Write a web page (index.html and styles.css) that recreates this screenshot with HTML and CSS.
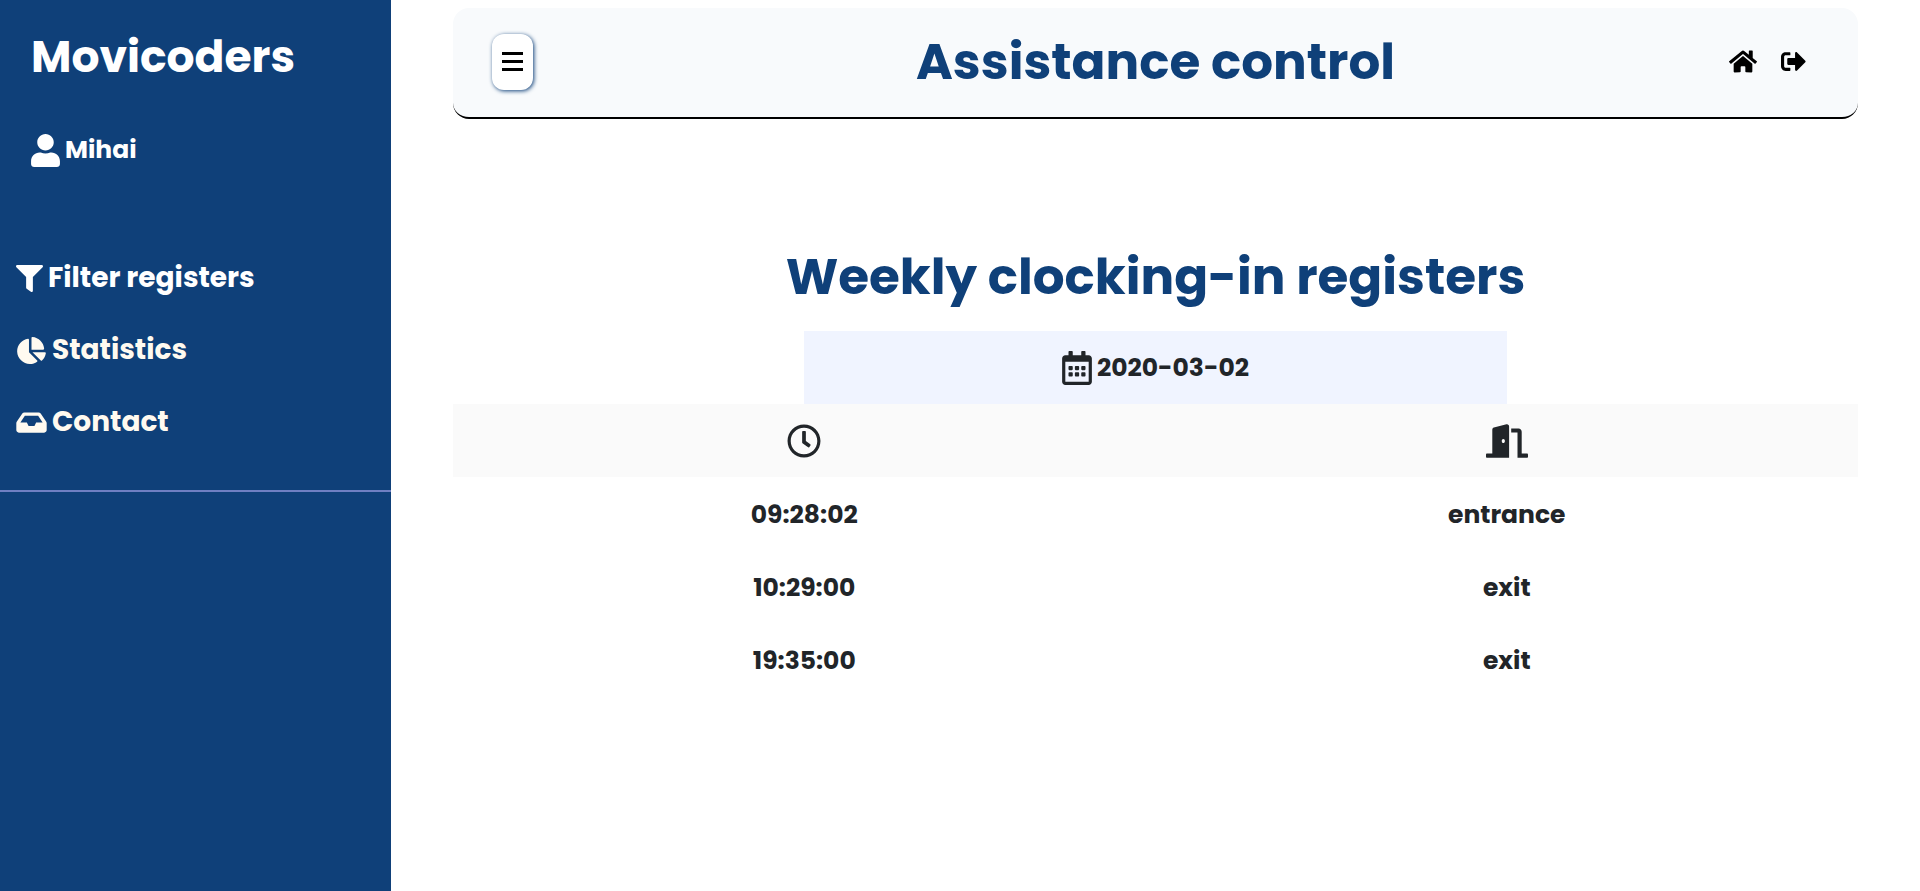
FILE: index.html
```html
<!DOCTYPE html>
<html lang="en">
<head>
<meta charset="utf-8">
<meta name="viewport" content="width=device-width, initial-scale=1">
<title>Assistance control</title>
<link rel="stylesheet" href="styles.css">
</head>
<body>
<div class="layout">
  <aside class="sidebar">
    <div class="brand">Movicoders</div>
    <div class="user">
      <svg class="icon-user" viewBox="0 0 448 512" aria-hidden="true"><path d="M224 256c70.700 0 128-57.300 128-128S294.700 0 224 0 96 57.300 96 128s57.300 128 128 128zm89.600 32h-16.700c-22.200 10.200-46.900 16-72.900 16s-50.600-5.800-72.900-16h-16.700C60.200 288 0 348.200 0 422.400V464c0 26.500 21.500 48 48 48h352c26.500 0 48-21.500 48-48v-41.600c0-74.200-60.200-134.400-134.400-134.400z"/></svg>
      <span>Mihai</span>
    </div>
    <nav class="menu" aria-label="Main">
      <a class="menu-link menu-link-active" href="#filter">
        <svg class="icon-filter" viewBox="0 0 512 512" aria-hidden="true"><path d="M487.976 0H24.028C2.710 0-8.047 25.866 7.058 40.971L192 225.941V432c0 7.831 3.821 15.170 10.237 19.662l80 55.980C298.020 518.690 320 507.493 320 487.980V225.941l184.947-184.970C520.021 25.896 509.338 0 487.976 0z"/></svg>
        <span>Filter registers</span>
      </a>
      <a class="menu-link" href="#statistics">
        <svg class="icon-pie" viewBox="0 0 544 512" aria-hidden="true"><path d="M527.790 288H290.500l158.030 158.030c6.040 6.040 15.980 6.530 22.190.680 38.700-36.460 65.320-85.610 73.130-140.860 1.340-9.460-6.510-17.850-16.060-17.850zm-15.830-64.800C503.720 103.740 408.260 8.280 288.800.040 279.680-.590 272 7.100 272 16.240V240h223.770c9.140 0 16.820-7.680 16.190-16.800zM224 288V50.710c0-9.550-8.390-17.400-17.840-16.060C86.990 51.490-4.100 155.600.140 280.370 4.500 408.510 114.830 513.590 243.030 511.980c50.400-.630 96.970-16.870 135.260-44.030 7.900-5.600 8.420-17.230 1.570-24.080L224 288z"/></svg>
        <span>Statistics</span>
      </a>
      <a class="menu-link" href="#contact">
        <svg class="icon-inbox" viewBox="0 0 576 512" aria-hidden="true"><path d="M567.938 243.908L462.250 85.374A48.003 48.003 0 0 0 422.311 64H153.689a48 48 0 0 0-39.938 21.374L8.062 243.908A47.994 47.994 0 0 0 0 270.533V400c0 26.510 21.490 48 48 48h480c26.510 0 48-21.490 48-48V270.533a47.994 47.994 0 0 0-8.062-26.625zM162.252 128h251.497l85.333 128H376l-32 64H232l-32-64H76.918l85.334-128z"/></svg>
        <span>Contact</span>
      </a>
    </nav>
  </aside>
  <main class="content">
    <header class="topbar">
      <button class="toggle" type="button" aria-label="Toggle menu">
        <svg class="icon-bars" viewBox="0 0 21 19" aria-hidden="true"><path d="M0 0h21v3H0zM0 8h21v3H0zM0 16h21v3H0z"/></svg>
      </button>
      <h1 class="title">Assistance control</h1>
      <div class="actions">
        <a class="action" href="#home" aria-label="Home"><svg class="icon-home" viewBox="0 0 576 512" aria-hidden="true"><path d="M280.370 148.260L96 300.110V464a16 16 0 0 0 16 16l112.060-.290a16 16 0 0 0 15.920-16V368a16 16 0 0 1 16-16h64a16 16 0 0 1 16 16v95.640a16 16 0 0 0 16 16.050L464 480a16 16 0 0 0 16-16V300L295.670 148.260a12.190 12.190 0 0 0-15.300 0zM571.600 251.470L488 182.560V44.050a12 12 0 0 0-12-12h-56a12 12 0 0 0-12 12v72.610L318.470 43a48 48 0 0 0-61 0L4.340 251.470a12 12 0 0 0-1.600 16.900l25.500 31A12 12 0 0 0 45.150 301l235.220-193.740a12.190 12.190 0 0 1 15.300 0L530.900 301a12 12 0 0 0 16.900-1.600l25.500-31a12 12 0 0 0-1.700-16.930z"/></svg></a>
        <a class="action" href="#logout" aria-label="Log out"><svg class="icon-logout" viewBox="0 0 512 512" aria-hidden="true"><path d="M497 273L329 441c-15 15-41 4.500-41-17v-96H152c-13.300 0-24-10.700-24-24v-96c0-13.300 10.700-24 24-24h136V88c0-21.400 25.900-32 41-17l168 168c9.300 9.400 9.300 24.600 0 34zM192 436v-40c0-6.600-5.400-12-12-12H96c-17.700 0-32-14.300-32-32V160c0-17.700 14.300-32 32-32h84c6.600 0 12-5.400 12-12V76c0-6.600-5.400-12-12-12H96c-53 0-96 43-96 96v192c0 53 43 96 96 96h84c6.600 0 12-5.400 12-12z"/></svg></a>
      </div>
    </header>
    <section class="registers">
      <h2 class="title">Weekly clocking-in registers</h2>
      <table class="table">
        <caption class="caption">
          <span class="date">
            <svg class="icon-calendar" viewBox="0 0 448 512" aria-hidden="true"><path d="M148 288h-40c-6.600 0-12-5.400-12-12v-40c0-6.600 5.400-12 12-12h40c6.600 0 12 5.400 12 12v40c0 6.600-5.400 12-12 12zm108-12v-40c0-6.600-5.400-12-12-12h-40c-6.600 0-12 5.400-12 12v40c0 6.600 5.400 12 12 12h40c6.600 0 12-5.400 12-12zm96 0v-40c0-6.600-5.400-12-12-12h-40c-6.600 0-12 5.400-12 12v40c0 6.600 5.400 12 12 12h40c6.600 0 12-5.400 12-12zm-96 96v-40c0-6.600-5.400-12-12-12h-40c-6.600 0-12 5.400-12 12v40c0 6.600 5.400 12 12 12h40c6.600 0 12-5.400 12-12zm-96 0v-40c0-6.600-5.400-12-12-12h-40c-6.600 0-12 5.400-12 12v40c0 6.600 5.400 12 12 12h40c6.600 0 12-5.400 12-12zm192 0v-40c0-6.600-5.400-12-12-12h-40c-6.600 0-12 5.400-12 12v40c0 6.600 5.400 12 12 12h40c6.600 0 12-5.400 12-12zm96-260v352c0 26.500-21.500 48-48 48H48c-26.500 0-48-21.500-48-48V112c0-26.500 21.500-48 48-48h48V12c0-6.600 5.400-12 12-12h40c6.600 0 12 5.400 12 12v52h128V12c0-6.600 5.400-12 12-12h40c6.600 0 12 5.400 12 12v52h48c26.500 0 48 21.500 48 48zm-48 346V160H48v298c0 3.300 2.700 6 6 6h340c3.300 0 6-2.700 6-6z"/></svg>
            <span>2020-03-02</span>
          </span>
        </caption>
        <thead>
          <tr>
            <th scope="col" aria-label="Time"><svg class="icon-clock" viewBox="0 0 512 512" aria-hidden="true"><path d="M256 8C119 8 8 119 8 256s111 248 248 248 248-111 248-248S393 8 256 8zm0 448c-110.500 0-200-89.500-200-200S145.500 56 256 56s200 89.500 200 200-89.500 200-200 200zm61.800-104.400l-84.900-61.700c-3.100-2.300-4.900-5.900-4.900-9.700V116c0-6.600 5.400-12 12-12h32c6.600 0 12 5.400 12 12v141.700l66.800 48.600c5.400 3.900 6.500 11.400 2.600 16.800L334.600 349c-3.900 5.300-11.400 6.500-16.800 2.600z"/></svg></th>
            <th scope="col" aria-label="Type"><svg class="icon-door" viewBox="0 0 640 512" aria-hidden="true"><path d="M624 448h-80V113.450C544 86.190 522.470 64 496 64H384v64h96v384h144c8.840 0 16-7.160 16-16v-32c0-8.840-7.160-16-16-16zM312.240 1.010l-192 49.740C105.990 54.440 96 67.700 96 82.920V448H16c-8.840 0-16 7.160-16 16v32c0 8.840 7.160 16 16 16h336V33.180c0-21.580-19.560-37.410-39.760-32.170zM264 288c-13.250 0-24-14.330-24-32s10.750-32 24-32 24 14.330 24 32-10.750 32-24 32z"/></svg></th>
          </tr>
        </thead>
        <tbody>
          <tr><td>09:28:02</td><td>entrance</td></tr>
          <tr><td>10:29:00</td><td>exit</td></tr>
          <tr><td>19:35:00</td><td>exit</td></tr>
        </tbody>
      </table>
    </section>
  </main>
</div>
</body>
</html>
```
FILE: styles.css
```css
* {
  box-sizing: border-box;
}

body {
  margin: 0;
  background: #fff;
  color: #212529;
  font-family: Poppins, Inter, "Liberation Sans", sans-serif;
  font-weight: 700;
}

svg {
  display: block;
  flex: none;
  fill: currentColor;
}

.layout {
  display: grid;
  grid-template-columns: minmax(0, 391fr) minmax(0, 1529fr);
  min-height: 100vh;
}

.sidebar {
  background: #0f4079;
  color: #fff;
}

.brand {
  padding: 25px 31px 0;
  font-size: 44px;
  line-height: 64px;
}

.user {
  display: flex;
  align-items: center;
  gap: 5px;
  padding: 41px 31px 0;
  font-size: 25px;
  line-height: 40px;
}

.menu {
  display: flex;
  flex-direction: column;
  gap: 32px;
  padding: 88px 16px 48px;
  border-bottom: 2px solid #6f7fc2;
}

.menu-link {
  display: flex;
  align-items: center;
  gap: 5px;
  color: #fffaf0;
  font-size: 28px;
  line-height: 40px;
  text-decoration: none;
}

.menu-link-active {
  color: #fff;
}

.content {
  padding: 8px 62px;
}

.topbar {
  display: grid;
  grid-template-columns: 1fr auto 1fr;
  align-items: center;
  min-height: 111px;
  padding: 0 39px 2px;
  border-bottom: 2px solid #000;
  border-radius: 16px;
  background: #f8fafc;
}

.toggle {
  display: flex;
  align-items: center;
  justify-content: center;
  width: 41px;
  height: 56px;
  padding: 0;
  border: 0;
  border-radius: 12px;
  background: #fff;
  color: #000;
  box-shadow: 1px 1px 4px #0f4079;
}

.title {
  margin: 0;
  color: #0f4079;
  font-size: 50px;
  font-weight: 700;
  line-height: 66px;
  text-align: center;
}

.actions {
  display: flex;
  align-items: center;
  justify-content: flex-end;
  gap: 24px;
  padding-right: 13px;
}

.action {
  color: #000;
}

.registers {
  padding-top: 125px;
}

.table {
  width: 100%;
  margin-top: 21px;
  border-collapse: collapse;
  table-layout: fixed;
  font-size: 25px;
  line-height: 41px;
  text-align: center;
}

.date {
  display: flex;
  align-items: center;
  justify-content: center;
  gap: 5px;
  width: 50%;
  margin: 0 auto;
  padding: 16px;
  background: #f0f4ff;
}

.table th,
.table td {
  height: 73px;
  padding: 16px;
}

.table td {
  padding: 17px 16px 15px;
}

.table th {
  background: #fafafa;
}

.table th svg {
  margin: 0 auto;
}

.icon-user {
  width: 29px;
  height: 33px;
}

.icon-filter {
  width: 27px;
  height: 27px;
}

.icon-pie {
  width: 31px;
  height: 27px;
}

.icon-inbox {
  width: 31px;
  height: 27px;
}

.icon-bars {
  width: 21px;
  height: 19px;
}

.icon-home {
  width: 28px;
  height: 25px;
}

.icon-logout {
  width: 25px;
  height: 25px;
}

.icon-calendar {
  width: 30px;
  height: 34px;
}

.icon-clock {
  width: 34px;
  height: 34px;
}

.icon-door {
  width: 42px;
  height: 34px;
}
```
